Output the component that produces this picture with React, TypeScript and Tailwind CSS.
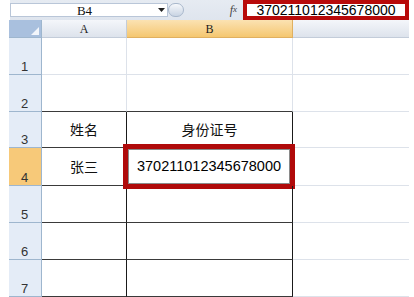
import React from 'react';

const rows = [1, 2, 3, 4, 5, 6, 7];
const cjk = { fontFamily: '"Noto Sans CJK SC", "Liberation Sans", sans-serif' };

export default function App() {
  return (
    <div className="w-[414px] h-[297px] overflow-hidden bg-white relative" style={{ fontFamily: '"Liberation Sans", sans-serif' }}>
      {/* formula bar */}
      <div className="h-[20px] flex bg-gradient-to-b from-[#e6ebf2] to-[#dfe5ee]">
        <div className="w-[10px] bg-white" />
        <div className="mt-[3px] h-[14px] w-[158px] bg-white border border-[#b9c6d8] flex items-center text-[13px] leading-none text-[#111]">
          <span className="flex-1 text-center" style={{ fontFamily: '"Liberation Serif", serif' }}>B4</span>
          <svg className="mr-[2px]" width="7" height="4" viewBox="0 0 7 4"><path d="M0 0h7L3.5 4z" fill="#222" /></svg>
        </div>
        <div className="mt-[3px] h-[14px] w-[16px] rounded-full bg-gradient-to-b from-[#f6f8fb] to-[#c9d4e3] border border-[#a9b8cc]" />
        <div className="flex-1 flex items-center justify-end pr-[6px] text-[12px] italic text-[#444]" style={{ fontFamily: '"Liberation Serif", serif' }}>
          f<span className="text-[9px]">x</span>
        </div>
        <div className="w-[166px] h-[20px] border-[4px] border-[#b80a0a] bg-white flex items-center justify-center text-[14px] leading-none text-black">
          370211012345678000
        </div>
        <div className="w-[5px] bg-white" />
      </div>

      {/* sheet */}
      <div className="flex">
        <div className="w-[9px] bg-white" />
        <div className="grid grid-cols-[33px_85px_166px_116px] grid-rows-[18px_37px_37px_36px_38px_37px_37px_37px]">
          {/* header row */}
          <div className="bg-[#a9c0de] border-r border-b border-[#9eb6ce] relative">
            <svg className="absolute right-[2px] bottom-[2px]" width="8" height="8" viewBox="0 0 8 8"><path d="M8 0v8H0z" fill="#f3f6fb" /></svg>
          </div>
          <div className="bg-gradient-to-b from-[#f4f6fa] to-[#dde3ec] border-r border-b border-[#c3ccd9] flex items-center justify-center text-[12px] text-[#222]" style={{ fontFamily: '"Liberation Serif", serif' }}>A</div>
          <div className="bg-gradient-to-b from-[#fbe2b2] to-[#f5c76f] border-r border-b border-[#e0b060] flex items-center justify-center text-[12px] text-[#222]" style={{ fontFamily: '"Liberation Serif", serif' }}>B</div>
          <div className="bg-gradient-to-b from-[#f4f6fa] to-[#dde3ec] border-b border-[#c3ccd9]" />

          {rows.map((r) => {
            const darkBottom = r >= 2;
            const darkRight = r >= 3;
            const cell = `border-b ${darkBottom ? 'border-b-[#3a3a3a]' : 'border-b-[#dde2ea]'} border-r ${darkRight ? 'border-r-[#1a1a1a]' : 'border-r-[#dde2ea]'} flex items-center justify-center text-[14px] text-[#111]`;
            return (
              <React.Fragment key={r}>
                <div className={`${r === 4 ? 'bg-[#f7c979]' : 'bg-[#e4ecf7]'} border-r border-b border-[#9eb6ce] flex items-end pl-[12px] pb-[1px] text-[13px] leading-none text-[#333]`}>
                  {r}
                </div>
                <div className={cell} style={cjk}>
                  {r === 3 ? '姓名' : r === 4 ? '张三' : ''}
                </div>
                <div className={`relative ${cell}`} style={cjk}>
                  {r === 3 ? '身份证号' : ''}
                  {r === 4 && (
                    <div className="absolute left-[-4px] top-[-4px] w-[172px] h-[45px] border-[5px] border-[#b00a0a] bg-white flex items-center justify-center" style={{ boxShadow: 'inset 0 0 0 1px #8a8a8a' }}>
                      <span className="text-[14.5px] leading-none text-black" style={{ fontFamily: '"Liberation Sans", sans-serif' }}>370211012345678000</span>
                    </div>
                  )}
                </div>
                <div className="border-b border-[#dde2ea]" />
              </React.Fragment>
            );
          })}
        </div>
      </div>
    </div>
  );
}
